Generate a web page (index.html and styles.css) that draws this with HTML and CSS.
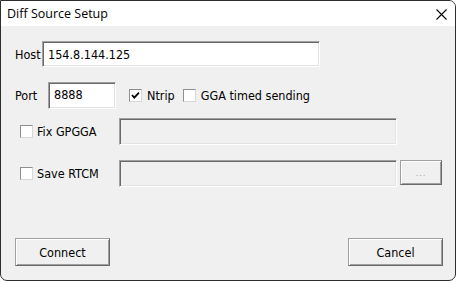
FILE: index.html
```html
<!DOCTYPE html>
<html lang="en">
<head>
  <meta charset="UTF-8" />
  <title>Diff Source Setup</title>
  <link rel="stylesheet" href="styles.css">
</head>
<body>
  <div class="window">
    <div class="titlebar">
      <span class="title">Diff Source Setup</span>
      <svg class="close" width="11" height="11" viewBox="0 0 11 11">
        <path d="M0.5 0.5 L10.5 10.5 M10.5 0.5 L0.5 10.5" stroke="#000" stroke-width="1.1" fill="none"/>
      </svg>
    </div>

    <div class="client">
      <div class="row row-host">
        <span class="label host-label">Host</span>
        <div class="edit host-edit">154.8.144.125</div>
      </div>

      <div class="row row-port">
        <span class="label port-label">Port</span>
        <div class="edit port-edit">8888</div>
        <span class="check ntrip-check">
          <svg width="11" height="11" viewBox="0 0 11 11">
            <path d="M2 5 L4.3 7.6 L9 2.6" stroke="#000" stroke-width="1.8" fill="none"/>
          </svg>
        </span>
        <span class="check-text">Ntrip</span>
        <span class="check gga-check"></span>
        <span class="check-text">GGA timed sending</span>
      </div>

      <div class="row row-fix">
        <div class="check-item">
          <span class="check"></span>
          <span class="check-text">Fix GPGGA</span>
        </div>
        <div class="edit wide-edit disabled"></div>
      </div>

      <div class="row row-save">
        <div class="check-item">
          <span class="check"></span>
          <span class="check-text">Save RTCM</span>
        </div>
        <div class="edit wide-edit disabled"></div>
        <div class="btn browse-btn">...</div>
      </div>

      <div class="row buttons">
        <div class="btn main-btn">Connect</div>
        <div class="btn main-btn">Cancel</div>
      </div>
    </div>
  </div>
</body>
</html>
```

FILE: styles.css
```css
body {
  margin: 0;
  background: #fff;
  font-family: "DejaVu Sans Condensed", "DejaVu Sans", Tahoma, sans-serif;
  font-stretch: semi-condensed;
  font-size: 12.5px;
  color: #000;
}

.window {
  box-sizing: border-box;
  width: 456px;
  height: 281px;
  border: 1px solid #2e2e2e;
  border-radius: 0 7px 7px 7px;
  background: #f0f0f0;
  overflow: hidden;
}

.titlebar {
  display: flex;
  align-items: center;
  height: 25px;
  background: #fff;
  padding-left: 6px;
}

.title {
  font-family: "Open Sans", sans-serif;
  font-stretch: normal;
  font-size: 12.5px;
}

.close {
  margin-left: auto;
  margin-right: 8px;
  margin-top: 1px;
}

.client {
  padding-left: 14px;
}

.row {
  display: flex;
  align-items: center;
}

.row-host {
  margin-top: 15px;
  height: 26px;
}

.row-port {
  margin-top: 15px;
  height: 27px;
}

.row-fix {
  margin-top: 9px;
  height: 27px;
}

.row-save {
  margin-top: 15px;
  height: 27px;
  align-items: flex-start;
}

.row-save .check-item {
  align-self: center;
}

.host-label {
  width: 27px;
}

.port-label {
  width: 33px;
}

.edit {
  box-sizing: border-box;
  height: 100%;
  background: #fff;
  border-top: 1px solid #a0a0a0;
  border-left: 1px solid #a0a0a0;
  border-right: 1px solid #fff;
  border-bottom: 1px solid #fff;
  box-shadow: inset 1px 1px 0 #696969, inset -1px -1px 0 #e3e3e3;
  padding-left: 5px;
  display: flex;
  align-items: center;
}

.host-edit {
  width: 278px;
}

.port-edit {
  width: 68px;
  align-items: flex-start;
  padding-top: 4px;
}

.wide-edit {
  width: 278px;
}

.edit.disabled {
  background: #f0f0f0;
}

.check {
  box-sizing: border-box;
  width: 13px;
  height: 13px;
  background: #fff;
  border: 1px solid #8f8f8f;
  border-right-color: #d8d8d8;
  border-bottom-color: #d8d8d8;
  flex-shrink: 0;
}

.check svg {
  display: block;
  margin: 0;
}

.ntrip-check {
  margin-left: 13px;
}

.gga-check {
  margin-left: 8px;
}

.check-text {
  margin-left: 5px;
}

.check-item {
  display: flex;
  align-items: center;
  width: 99px;
  margin-left: 5px;
  box-sizing: border-box;
}

.check-item .check-text {
  margin-left: 4px;
}

.btn {
  box-sizing: border-box;
  display: flex;
  align-items: center;
  justify-content: center;
  background: #f0f0f0;
  border-top: 1px solid #a0a0a0;
  border-left: 1px solid #a0a0a0;
  border-right: 1px solid #696969;
  border-bottom: 1px solid #696969;
  box-shadow: inset 1px 1px 0 #fff, inset -1px -1px 0 #a0a0a0;
}

.browse-btn {
  width: 42px;
  height: 25px;
  margin-left: 3px;
  color: #a0a0a0;
  font-size: 9px;
  letter-spacing: 1px;
}

.buttons {
  margin-top: 51px;
  width: 428px;
  height: 28px;
  justify-content: space-between;
}

.main-btn {
  width: 95px;
  height: 28px;
}
```
